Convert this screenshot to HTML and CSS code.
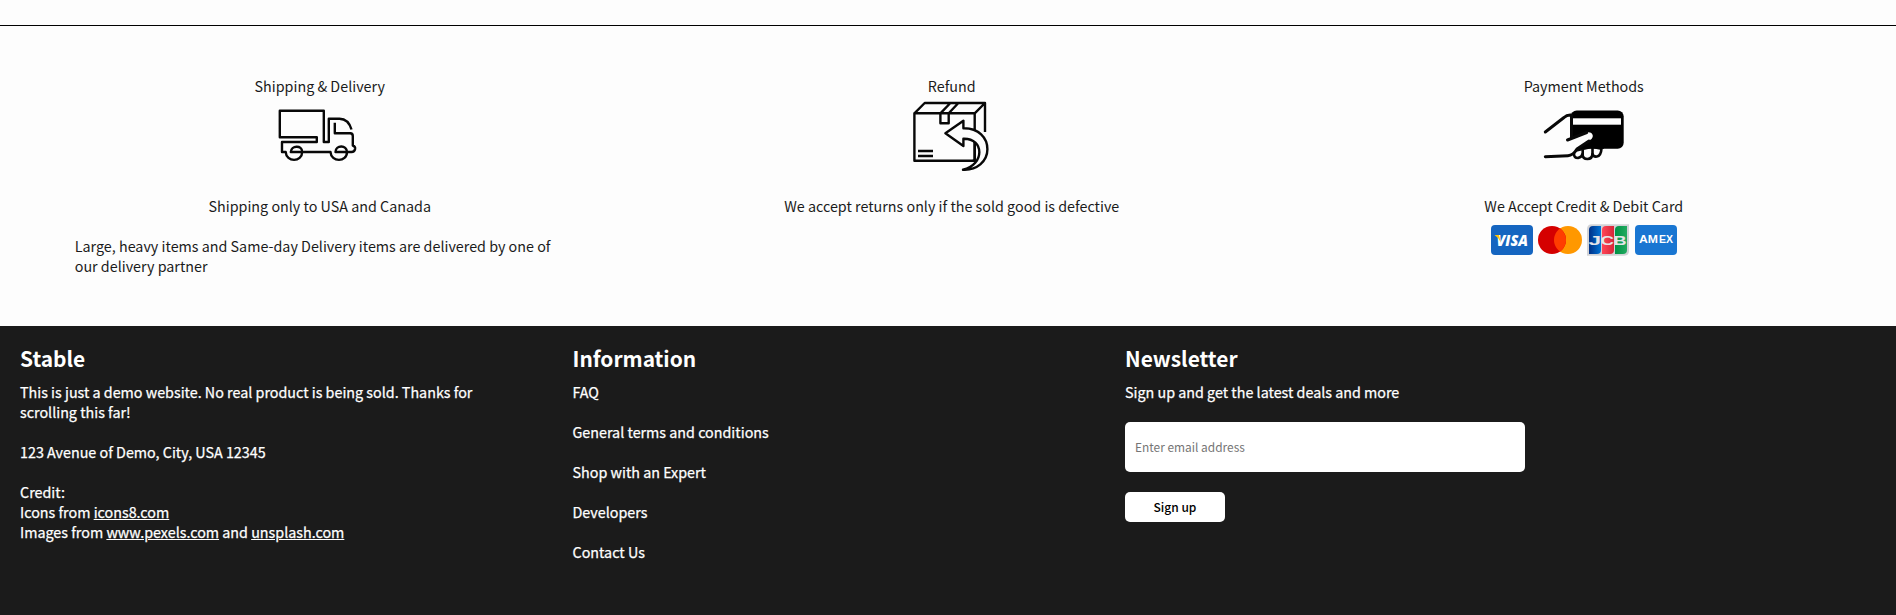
FILE: index.html
```html
<!DOCTYPE html>
<html lang="en">
<head>
<meta charset="utf-8">
<title>Stable</title>
<link rel="stylesheet" href="styles.css">
</head>
<body>
<section class="services">
  <article class="service">
    <p>Shipping &amp; Delivery</p>
    <svg class="service-icon line-icon" viewBox="0.5 0 80 80">
      <path d="M55.3 25.7V36.3H70.7Q73.3 36.5 73.3 39V48.5Q76 49.5 75.6 52Q75 55 72 55H56C56 48 67.500 47.500 67.500 55C67.500 65.500 51.500 65.500 51 55H11.300C11.500 48.500 22.700 47.500 22.700 55C22.500 65.500 6.700 65.500 6.200 55H2.500V45H37.300V40.300H.3V13.700H44.300V45H49.300V21.700H60Q69 22 72 32.500"/>
    </svg>
    <p class="service-text">Shipping only to USA and Canada</p>
    <p class="service-note">Large, heavy items and Same-day Delivery items are delivered by one of our delivery partner</p>
  </article>
  <article class="service">
    <p>Refund</p>
    <svg class="service-icon line-icon" viewBox="0.3 0 80 80">
      <path d="M2.700 16.300H63V63.700H2.700ZM2.700 16.300 13 6H73.300L63 16.300M73.300 6V35M38.700 6 28.700 16.300V26.300H37V16.300L46.700 6M6.300 54H21.300M6.300 59H21.300"/>
      <path class="paper" d="M33.700 36.300 51.700 23.700V31.300C67 31 75.700 41 75.700 52.300C75.700 64.500 65 73.500 51.300 72.700C73 68 73 41 51.700 41.700V49Z"/>
      <path d="M63 45V63.700H61"/>
    </svg>
    <p class="service-text">We accept returns only if the sold good is defective</p>
  </article>
  <article class="service">
    <p>Payment Methods</p>
    <svg class="service-icon line-icon" viewBox="0 0 80 80">
      <rect class="ink" x="26.700" y="13.500" width="53" height="38.300" rx="6"/>
      <rect class="stripe" x="28.700" y="21.300" width="48.300" height="6.400"/>
      <g class="fingers">
        <path class="paper" d="M30 54V57Q30 61 34 61Q38 60 38.500 57Q38.500 62 43.500 62Q48 62 48.500 57Q49 60 53 59.500Q57 59 57.500 51.700L49 50H47Z"/>
        <path d="M38.700 58V52M48.500 58V51"/>
      </g>
      <path class="ink" d="M46 44H60V51.800H34Z"/>
      <path class="cover" d="M22.700 43 42.700 35.500C47 34 51 38 47.500 42L33 52Q29 58.500 24 59H0V35L21 20L27 18V40Z"/>
      <path class="hand" d="M1.300 35 20 20.500Q23 17.500 27.500 18V40.500M23.500 43 42.700 35.500M45 44L33 52Q29 58.500 24 58.700L1.300 59.700"/>
    </svg>
    <p class="service-text">We Accept Credit &amp; Debit Card</p>
    <div class="cards">
      <svg class="card" viewBox="0 0 48 48">
        <rect x="3" y="9" width="42" height="30" rx="4" fill="#1565c0"/>
        <text class="visa" x="8.500" y="30" textLength="31.500" lengthAdjust="spacingAndGlyphs">VISA</text>
        <path d="M6.500 19H11L12.600 26Q10.500 21.500 6.500 19Z" fill="#ffc107"/>
      </svg>
      <svg class="card" viewBox="0 0 48 48">
        <circle cx="32" cy="24" r="14" fill="#ff9800"/>
        <circle cx="16" cy="24" r="14" fill="#d50000"/>
        <path d="M18 24c0 4.755 2.376 8.950 6 11.480c3.624-2.530 6-6.725 6-11.480s-2.376-8.950-6-11.480C20.376 15.050 18 19.245 18 24z" fill="#ff3d00"/>
      </svg>
      <svg class="card" viewBox="0 0 48 48">
        <defs>
          <linearGradient id="blue"><stop stop-color="#003087"/><stop offset="1" stop-color="#0073d5"/></linearGradient>
          <linearGradient id="red"><stop stop-color="#ff4658"/><stop offset="1" stop-color="#d72638"/></linearGradient>
          <linearGradient id="green"><stop stop-color="#009245"/><stop offset="1" stop-color="#22aa60"/></linearGradient>
        </defs>
        <path d="M8 8.300H45V35Q45 39.700 40 39.700H3V13Q3 8.300 8 8.300Z" fill="#d2d3d6"/>
        <path d="M9 10H17V34Q17 38 13 38H5V14Q5 10 9 10Z" fill="url(#blue)"/>
        <path d="M22 10H30V34Q30 38 26 38H18V14Q18 10 22 10Z" fill="url(#red)"/>
        <path d="M35 10H43V34Q43 38 39 38H31V14Q31 10 35 10Z" fill="url(#green)"/>
        <text class="jcb" x="4.500" y="28.500" textLength="12.500" lengthAdjust="spacingAndGlyphs">J</text>
        <text class="jcb" x="16.500" y="28.500" textLength="13.500" lengthAdjust="spacingAndGlyphs">C</text>
        <text class="jcb" x="29.500" y="28.500" textLength="13" lengthAdjust="spacingAndGlyphs">B</text>
      </svg>
      <svg class="card" viewBox="0 0 48 48">
        <rect x="3" y="9" width="42" height="30" rx="4" fill="#1976d2"/>
        <text class="amex" x="7" y="27" textLength="19" lengthAdjust="spacingAndGlyphs">AM</text>
        <text class="amex" x="27" y="27" textLength="14" lengthAdjust="spacingAndGlyphs">EX</text>
      </svg>
    </div>
  </article>
</section>
<footer class="footer">
  <section class="footer-column">
    <h2>Stable</h2>
    <p class="about">This is just a demo website. No real product is being sold. Thanks for scrolling this far!</p>
    <p>123 Avenue of Demo, City, USA 12345</p>
    <p>Credit:<br>Icons from <a href="#">icons8.com</a><br>Images from <a href="#">www.pexels.com</a> and <a href="#">unsplash.com</a></p>
  </section>
  <section class="footer-column">
    <h2>Information</h2>
    <p>FAQ</p>
    <p>General terms and conditions</p>
    <p>Shop with an Expert</p>
    <p>Developers</p>
    <p>Contact Us</p>
  </section>
  <section class="footer-column">
    <h2>Newsletter</h2>
    <p>Sign up and get the latest deals and more</p>
    <form class="signup">
      <input class="email" type="email" placeholder="Enter email address">
      <button class="submit" type="button">Sign up</button>
    </form>
  </section>
</footer>
</body>
</html>
```
FILE: styles.css
```css
* { box-sizing: border-box; margin: 0; padding: 0; }
body {
  font-family: "Noto Sans CJK SC", "Noto Sans", sans-serif;
  font-size: 14.32px;
  line-height: 20px;
  color: #1b1b1b;
  background: #fdfdfd;
  padding-top: 25px;
  height: 615px;
  overflow: hidden;
}
.services {
  display: grid;
  grid-template-columns: repeat(3, 1fr);
  height: 301px;
  padding-top: 50px;
  border-top: 1px solid #000;
}
.service {
  display: flex;
  flex-direction: column;
  align-items: center;
  padding-left: 7.5px;
}
.service-icon { width: 80px; height: 80px; flex: none; margin-top: 1px; overflow: visible; }
.line-icon { fill: none; stroke: #080808; stroke-width: 2.4; stroke-linejoin: round; }
.line-icon .paper { fill: #fdfdfd; }
.line-icon .fingers { stroke-width: 2.6; }
.line-icon .ink { fill: #000; stroke: none; }
.line-icon .stripe, .line-icon .cover { fill: #fdfdfd; stroke: none; }
.line-icon .hand { stroke-width: 3; stroke-linecap: round; }
.service-text { margin-top: 19px; }
.service-note { width: 490px; margin-top: 20px; }
.cards { display: flex; }
.card { width: 48px; height: 48px; }
.card text { fill: #fff; font-family: "Open Sans", sans-serif; font-weight: 700; }
.card .visa { font-size: 15.5px; font-style: italic; font-weight: 800; }
.card .jcb { font-size: 12.5px; font-family: "Liberation Sans", sans-serif; fill: #e4e5e8; }
.card .amex { font-size: 10px; font-family: "Liberation Sans", sans-serif; }
.footer {
  display: grid;
  grid-template-columns: repeat(3, 532.5px);
  column-gap: 20px;
  height: 289px;
  padding: 19px 20px 20px;
  background: #1b1b1b;
  color: #fff;
}
.footer h2 { font-size: 20.9px; line-height: 27px; font-weight: 700; margin-bottom: 10px; }
.footer p { margin-bottom: 20px; -webkit-text-stroke: 0.25px #fff; }
.footer a { color: inherit; }
.about { width: 480px; }
.signup { display: flex; flex-direction: column; align-items: flex-start; gap: 20px; }
.email, .submit { border: 0; border-radius: 5px; background: #fff; font-family: inherit; }
.email { width: 400px; height: 50px; padding: 0 10px 2px; font-size: 11.92px; }
.email::placeholder { color: #757575; }
.submit { width: 100px; height: 30px; padding-bottom: 2px; font-size: 12px; font-weight: 500; color: #000; }
```
